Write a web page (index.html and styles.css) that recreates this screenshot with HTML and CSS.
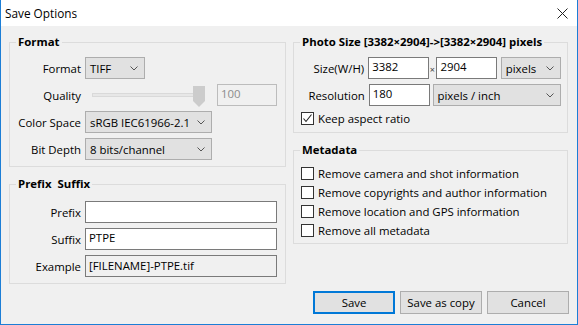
FILE: index.html
```html
<!DOCTYPE html>
<html lang="en">
<head>
    <meta charset="UTF-8">
    <title>Save Options</title>
    <link rel="stylesheet" href="styles.css">
</head>
<body>
    <div class="window">
        <div class="titlebar">
            <span class="title">Save Options</span>
            <svg class="close" width="11" height="11" viewBox="0 0 11 11">
                <path d="M0.5 0.5 L10.5 10.5 M10.5 0.5 L0.5 10.5" stroke="#222" stroke-width="1" fill="none"/>
            </svg>
        </div>

        <div class="content">
            <div class="columns">
                <div class="col">
                    <fieldset class="group group-format">
                        <legend>Format</legend>
                        <div class="row">
                            <span class="label">Format</span>
                            <div class="select w-format">TIFF
                                <svg class="arrow" width="8" height="5" viewBox="0 0 8 5"><path d="M0.5 0.5 L4 4 L7.5 0.5" stroke="#555" fill="none"/></svg>
                            </div>
                        </div>
                        <div class="row">
                            <span class="label">Quality</span>
                            <div class="slider">
                                <div class="track"></div>
                                <svg class="thumb" width="12" height="21" viewBox="0 0 12 21"><path d="M0 0 H12 V15 L6 21 L0 15 Z" fill="#cccccc"/></svg>
                            </div>
                            <div class="input disabled w-quality">100</div>
                        </div>
                        <div class="row">
                            <span class="label">Color Space</span>
                            <div class="select w-wide">sRGB IEC61966-2.1
                                <svg class="arrow" width="8" height="5" viewBox="0 0 8 5"><path d="M0.5 0.5 L4 4 L7.5 0.5" stroke="#555" fill="none"/></svg>
                            </div>
                        </div>
                        <div class="row">
                            <span class="label">Bit Depth</span>
                            <div class="select w-wide">8 bits/channel
                                <svg class="arrow" width="8" height="5" viewBox="0 0 8 5"><path d="M0.5 0.5 L4 4 L7.5 0.5" stroke="#555" fill="none"/></svg>
                            </div>
                        </div>
                    </fieldset>

                    <fieldset class="group group-prefix">
                        <legend>Prefix&nbsp; Suffix</legend>
                        <div class="row">
                            <span class="label">Prefix</span>
                            <div class="input w-text"></div>
                        </div>
                        <div class="row">
                            <span class="label">Suffix</span>
                            <div class="input w-text">PTPE</div>
                        </div>
                        <div class="row">
                            <span class="label">Example</span>
                            <div class="input readonly w-text">[FILENAME]-PTPE.tif</div>
                        </div>
                    </fieldset>
                </div>

                <div class="col">
                    <fieldset class="group group-size">
                        <legend>Photo Size [3382×2904]-&gt;[3382×2904] pixels</legend>
                        <div class="row">
                            <span class="label">Size(W/H)</span>
                            <div class="input w-num">3382</div>
                            <span class="times">×</span>
                            <div class="input w-num">2904</div>
                            <div class="select w-unit">pixels
                                <svg class="arrow" width="8" height="5" viewBox="0 0 8 5"><path d="M0.5 0.5 L4 4 L7.5 0.5" stroke="#555" fill="none"/></svg>
                            </div>
                        </div>
                        <div class="row">
                            <span class="label">Resolution</span>
                            <div class="input w-num">180</div>
                            <div class="select w-res">pixels / inch
                                <svg class="arrow" width="8" height="5" viewBox="0 0 8 5"><path d="M0.5 0.5 L4 4 L7.5 0.5" stroke="#555" fill="none"/></svg>
                            </div>
                        </div>
                        <div class="check-row first-check">
                            <span class="box">
                                <svg width="11" height="11" viewBox="0 0 11 11"><path d="M1.5 5.5 L4 8.5 L9.5 1.5" stroke="#222" stroke-width="1.1" fill="none"/></svg>
                            </span>
                            Keep aspect ratio
                        </div>
                    </fieldset>

                    <fieldset class="group group-meta">
                        <legend>Metadata</legend>
                        <div class="check-row"><span class="box"></span>Remove camera and shot information</div>
                        <div class="check-row"><span class="box"></span>Remove copyrights and author information</div>
                        <div class="check-row"><span class="box"></span>Remove location and GPS information</div>
                        <div class="check-row"><span class="box"></span>Remove all metadata</div>
                    </fieldset>
                </div>
            </div>

            <div class="buttons">
                <button class="default">Save</button>
                <button>Save as copy</button>
                <button>Cancel</button>
            </div>
        </div>
    </div>
</body>
</html>
```

FILE: styles.css
```css
body, html {
    margin: 0;
    padding: 0;
    background: #f0f0f0;
    font-family: "Open Sans", "Noto Sans", sans-serif;
    font-size: 11.4px;
    color: #000;
}

.window {
    box-sizing: border-box;
    width: 578px;
    height: 325px;
    border: 1px solid #1c7ed6;
    border-top: none;
    background: #f0f0f0;
}

.titlebar {
    height: 26px;
    background: #fff;
    display: flex;
    align-items: center;
    justify-content: space-between;
    padding: 0 9px 0 4px;
}

.title {
    font-size: 11.8px;
}

.content {
    padding: 8px 8px 0 8px;
}

.columns {
    display: grid;
    grid-template-columns: 277px 275px;
    gap: 7px;
    align-items: start;
}

.group {
    margin: 0;
    border: 1px solid #dcdcdc;
    padding: 7px 6px 6px 6px;
    min-width: 0;
}

.group legend {
    font-weight: bold;
    line-height: 16px;
    padding: 0 2px;
}

.group-prefix {
    margin-top: 9px;
    padding-top: 9px;
}

.group-size {
    padding-bottom: 4px;
}

.group-meta {
    margin-top: 9px;
    padding-top: 6px;
    padding-bottom: 3px;
}

.row {
    display: flex;
    align-items: center;
    height: 22px;
    margin-bottom: 5px;
}

.row:last-child {
    margin-bottom: 0;
}

.label {
    width: 65px;
    margin-right: 4px;
    text-align: right;
    white-space: nowrap;
}

.select {
    box-sizing: border-box;
    height: 22px;
    background: #e1e1e1;
    border: 1px solid #adadad;
    padding: 0 0 0 4px;
    line-height: 19px;
    display: flex;
    align-items: center;
    justify-content: space-between;
    white-space: nowrap;
}

.select .arrow {
    margin-right: 6px;
}

.input {
    box-sizing: border-box;
    height: 22px;
    background: #fff;
    border: 1px solid #7a7a7a;
    padding: 0 3px;
    line-height: 17px;
    white-space: nowrap;
}

.input.disabled {
    background: #f0f0f0;
    border-color: #bcbcbc;
    color: #8c8c8c;
}

.input.readonly {
    background: #f0f0f0;
    line-height: 19px;
}

.w-format { width: 60px; }
.w-wide { width: 127px; }
.w-quality { width: 60px; margin-left: 5px; }
.w-text { width: 192px; }
.w-num { width: 61px; }
.w-unit { width: 61px; margin-left: 4px; }
.w-res { width: 129px; margin-left: 3px; }

.slider {
    width: 127px;
    height: 22px;
    display: flex;
    align-items: center;
}

.track {
    box-sizing: border-box;
    width: 103px;
    height: 4px;
    margin-left: 7px;
    background: #e7e7e7;
    border: 1px solid #d9d9d9;
}

.thumb {
    margin-left: -2px;
    margin-top: 2px;
}

.times {
    width: 8px;
    font-size: 9px;
    text-align: center;
    color: #444;
    padding-top: 3px;
}

.check-row {
    display: flex;
    align-items: center;
    height: 19px;
    white-space: nowrap;
}

.first-check {
    margin-top: -2px;
}

.box {
    box-sizing: border-box;
    width: 13px;
    height: 13px;
    margin: 0 4px 0 1px;
    background: #fff;
    border: 1px solid #333;
    display: flex;
    align-items: center;
    justify-content: center;
}

.buttons {
    display: flex;
    justify-content: flex-end;
    gap: 5px;
    margin-top: 7px;
}

.buttons button {
    box-sizing: border-box;
    width: 82px;
    height: 23px;
    background: #e1e1e1;
    border: 1px solid #adadad;
    font-family: inherit;
    font-size: 11.4px;
    padding: 0;
    color: #000;
}

.buttons button.default {
    border: 2px solid #0078d7;
}
```
